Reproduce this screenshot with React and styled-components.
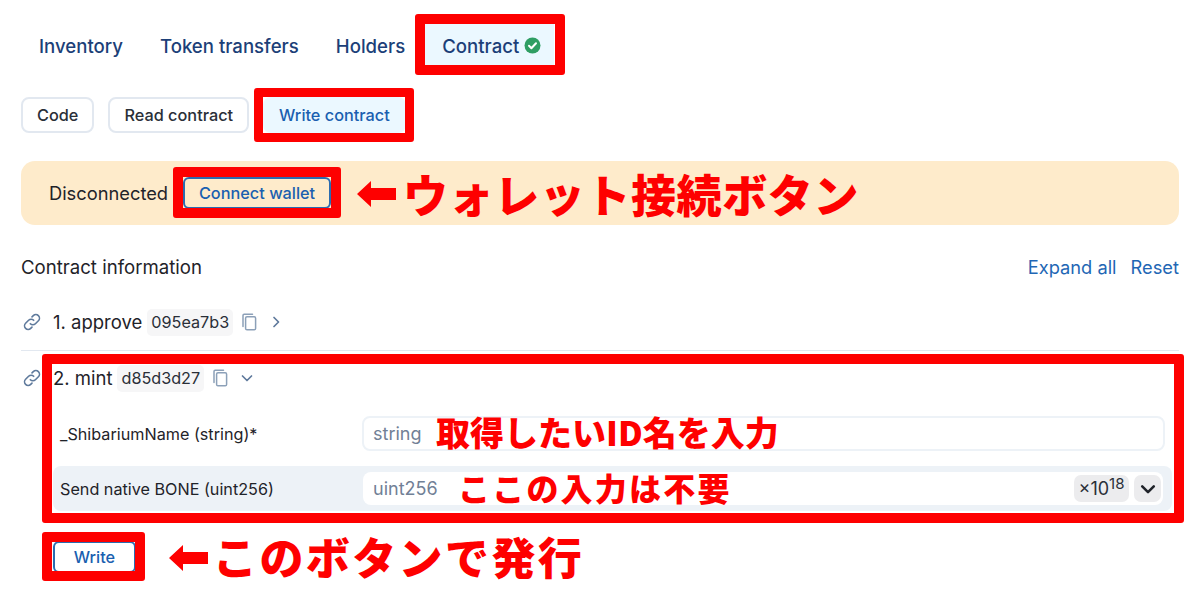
import React from 'react';
import styled, { createGlobalStyle } from 'styled-components';

const GlobalStyle = createGlobalStyle`
	html, body {
		margin: 0;
		padding: 0;
		background: #fff;
		font-family: Inter, "Liberation Sans", sans-serif;
		color: #1f2937;
	}
`

const Page = styled.div`
	position: relative;
	width: 1200px;
	height: 591px;
	box-sizing: border-box;
	padding: 24px 21px 0;
	overflow: hidden;
`

const Tabs = styled.div`
	display: flex;
	height: 41px;
`

const Tab = styled.div`
	display: flex;
	align-items: center;
	gap: 5px;
	padding: 2px ${p => (p.$active ? 13 : 18)}px 0 18px;
	margin-right: 1px;
	font-size: 18.6px;
	font-weight: 500;
	color: #1c3f78;
	background: ${p => (p.$active ? '#ebf8ff' : 'transparent')};
`

const SubTabs = styled.div`
	display: flex;
	gap: 14px;
	margin-top: 32px;
	height: 36px;
`

const SubTab = styled.div`
	display: flex;
	align-items: center;
	box-sizing: border-box;
	padding: 0 14px;
	font-size: 16.3px;
	font-weight: 500;
	border-radius: 8px;
	color: ${p => (p.$active ? '#1a5fb0' : '#2a2f38')};
	background: ${p => (p.$active ? '#ebf8ff' : '#fff')};
	border: 2px solid ${p => (p.$active ? '#ebf8ff' : '#e2e8f0')};
`

const Banner = styled.div`
	display: flex;
	align-items: center;
	gap: 15px;
	margin-top: 28px;
	height: 64px;
	padding: 0 28px;
	border-radius: 14px;
	background: #feebcb;
	font-size: 18.3px;
	color: #1f2329;
`

const OutlineButton = styled.div`
	display: flex;
	align-items: center;
	justify-content: center;
	box-sizing: border-box;
	width: ${p => p.$width}px;
	height: 32px;
	border: 2px solid #2b6cb0;
	border-radius: 6px;
	background: transparent;
	color: #1a5fb0;
	font-size: 16.3px;
	font-weight: 500;
`

const InfoHeader = styled.div`
	display: flex;
	align-items: center;
	justify-content: space-between;
	margin-top: 30px;
	height: 24px;
	font-size: 18.6px;
	font-weight: 400;
	color: #1f2329;
`

const Links = styled.div`
	display: flex;
	gap: 14px;
	font-size: 18.3px;
	color: #1f67b5;
`

const MethodRow = styled.div`
	display: flex;
	align-items: center;
	margin-top: ${p => p.$top || 0}px;
	height: ${p => p.$height}px;
	font-size: 18.5px;
	font-weight: 400;
	color: #1f2329;
	border-bottom: ${p => (p.$divider ? '1px solid #e2e8f0' : 'none')};
`

const Hash = styled.span`
	display: inline-flex;
	align-items: center;
	height: 27px;
	margin-left: 5px;
	padding: 0 4px;
	border-radius: 5px;
	background: #f6f6f7;
	font-size: 16.2px;
	font-weight: 400;
	color: #2a2f38;
`

const IconSlot = styled.span`
	display: inline-flex;
	align-items: center;
	justify-content: center;
	flex: none;
	color: #5f7a9c;
	margin: ${p => p.$margin || 0};
`

const Form = styled.div`
	display: flex;
	flex-direction: column;
	margin: 11px 7px 0 32px;
`

const FieldRow = styled.div`
	display: flex;
	align-items: center;
	height: ${p => p.$height}px;
	margin-top: ${p => p.$top || 0}px;
	padding: 0 ${p => (p.$shaded ? 9 : 7)}px 0 7px;
	border-radius: 8px;
	background: ${p => (p.$shaded ? '#edf2f7' : 'transparent')};
`

const FieldLabel = styled.div`
	width: ${p => p.$width}px;
	flex: none;
	font-size: 16.2px;
	font-weight: 400;
	color: #1f2329;
`

const Input = styled.div`
	display: flex;
	align-items: center;
	flex: 1;
	box-sizing: border-box;
	height: ${p => p.$height}px;
	padding: 0 ${p => (p.$plain ? 2 : 9)}px 0 ${p => (p.$plain ? 10 : 9)}px;
	border-radius: 8px;
	background: #fff;
	border: ${p => (p.$plain ? 'none' : '2px solid #edf2f7')};
	font-size: 18px;
	color: #718096;
`

const Suffix = styled.div`
	display: flex;
	align-items: center;
	gap: 5px;
	margin-left: auto;
`

const Chip = styled.div`
	display: flex;
	align-items: center;
	justify-content: center;
	height: 27px;
	width: ${p => p.$width}px;
	border-radius: 7px;
	background: #ececee;
	font-size: 18px;
	color: #2a2f38;
`

const Power = styled.span`
	font-size: 15px;
	line-height: 1;
	align-self: flex-start;
	margin-top: 1px;
`

const WriteWrap = styled.div`
	margin: 30px 0 0 32px;
`

// red markup drawn on top of the screenshot
const Frame = styled.div`
	position: absolute;
	left: ${p => p.$x}px;
	top: ${p => p.$y}px;
	width: ${p => p.$w}px;
	height: ${p => p.$h}px;
	box-sizing: border-box;
	border: ${p => p.$border || 10}px solid #fe0000;
	border-radius: 3px;
`

const Note = styled.div`
	position: absolute;
	left: ${p => p.$x}px;
	top: ${p => p.$y}px;
	line-height: ${p => p.$size + 4}px;
	font-family: "Noto Sans CJK JP", sans-serif;
	font-weight: 900;
	font-size: ${p => p.$size}px;
	letter-spacing: ${p => p.$spacing || 0}px;
	color: #fe0000;
	white-space: nowrap;
`

const ArrowMark = styled.svg`
	position: absolute;
	left: ${p => p.$x}px;
	top: ${p => p.$y}px;
`

const CheckBadge = () => (
	<svg width="17" height="17" viewBox="0 0 17 17">
		<circle cx="8.5" cy="8.5" r="8" fill="#2f9e63" />
		<path d="M5 8.8l2.4 2.4L12 6.2" fill="none" stroke="#fff" strokeWidth="2" strokeLinecap="round" strokeLinejoin="round" />
	</svg>
)

const LinkIcon = () => (
	<svg width="20" height="20" viewBox="0 0 20 20" fill="none" stroke="currentColor" strokeWidth="1.6" strokeLinecap="round">
		<path d="M8.3 11.7a3.6 3.6 0 0 0 5.1 0l3-3a3.6 3.6 0 0 0-5.1-5.1l-1.3 1.3" />
		<path d="M11.7 8.3a3.6 3.6 0 0 0-5.1 0l-3 3a3.6 3.6 0 0 0 5.1 5.1l1.3-1.3" />
	</svg>
)

const CopyIcon = () => (
	<svg width="16" height="18" viewBox="0 0 16 18" fill="none" stroke="#8ca0b8" strokeWidth="1.5" strokeLinejoin="round">
		<rect x="4.6" y="3.8" width="10" height="13" rx="1.4" />
		<path d="M2 13.5V2.4c0-.6.5-1.1 1.1-1.1h8.4" strokeLinecap="round" />
	</svg>
)

const Chevron = ({ open, color = '#5f7a9c', width = 1.7, size = 14 }) => (
	<svg width={size} height={size} viewBox="0 0 14 14" fill="none" stroke={color} strokeWidth={width} strokeLinecap="round" strokeLinejoin="round">
		{open ? <path d="M2.5 5l4.5 4.5L11.500 5" /> : <path d="M5 2.500L9.500 7 5 11.500" />}
	</svg>
)

const Arrow = ({ x, y }) => (
	<ArrowMark $x={x} $y={y} width="39" height="26" viewBox="0 0 39 26">
		<path d="M0 13L14 0v7h25v12H14v7z" fill="#fe0000" />
	</ArrowMark>
)

const App = () => (
	<Page>
		<GlobalStyle />
		<Tabs>
			<Tab>Inventory</Tab>
			<Tab>Token transfers</Tab>
			<Tab>Holders</Tab>
			<Tab $active>Contract <CheckBadge /></Tab>
		</Tabs>

		<SubTabs>
			<SubTab>Code</SubTab>
			<SubTab>Read contract</SubTab>
			<SubTab $active>Write contract</SubTab>
		</SubTabs>

		<Banner>
			Disconnected
			<OutlineButton $width={148}>Connect wallet</OutlineButton>
		</Banner>

		<InfoHeader>
			Contract information
			<Links>
				<span>Expand all</span>
				<span>Reset</span>
			</Links>
		</InfoHeader>

		<MethodRow $height={56} $divider $top={15}>
			<IconSlot $margin="0 11px 0 1px"><LinkIcon /></IconSlot>
			1. approve
			<Hash>095ea7b3</Hash>
			<IconSlot $margin="0 0 0 8px"><CopyIcon /></IconSlot>
			<IconSlot $margin="0 0 0 12px"><Chevron /></IconSlot>
		</MethodRow>
		<MethodRow $height={54}>
			<IconSlot $margin="0 11px 0 1px"><LinkIcon /></IconSlot>
			2. mint
			<Hash>d85d3d27</Hash>
			<IconSlot $margin="0 0 0 8px"><CopyIcon /></IconSlot>
			<IconSlot $margin="0 0 0 12px"><Chevron open /></IconSlot>
		</MethodRow>

		<Form>
			<FieldRow $height={35}>
				<FieldLabel $width={302}>_ShibariumName (string)*</FieldLabel>
				<Input $height={35}>string</Input>
			</FieldRow>
			<FieldRow $height={45} $top={15} $shaded>
				<FieldLabel $width={303}>Send native BONE (uint256)</FieldLabel>
				<Input $height={33} $plain>
					uint256
					<Suffix>
						<Chip $width={55}>×10<Power>18</Power></Chip>
						<Chip $width={27}><Chevron open color="#1f2329" width={2} size={18} /></Chip>
					</Suffix>
				</Input>
			</FieldRow>
		</Form>

		<WriteWrap>
			<OutlineButton $width={83}>Write</OutlineButton>
		</WriteWrap>

		<Frame $x={415} $y={14} $w={150} $h={61} />
		<Frame $x={254} $y={88} $w={160} $h={54} $border={9} />
		<Frame $x={173} $y={167} $w={168} $h={51} />
		<Frame $x={42} $y={354} $w={1142} $h={169} />
		<Frame $x={42} $y={532} $w={103} $h={49} />

		<Arrow x={357} y={181} />
		<Note $x={403} $y={169} $size={45} $spacing={0.6}>ウォレット接続ボタン</Note>
		<Note $x={436} $y={413} $size={34}>取得したいID名を入力</Note>
		<Note $x={458} $y={469} $size={32} $spacing={2.2}>ここの入力は不要</Note>
		<Arrow x={169} y={545} />
		<Note $x={213} $y={532} $size={44} $spacing={2.4}>このボタンで発行</Note>
	</Page>
);

export default App;
